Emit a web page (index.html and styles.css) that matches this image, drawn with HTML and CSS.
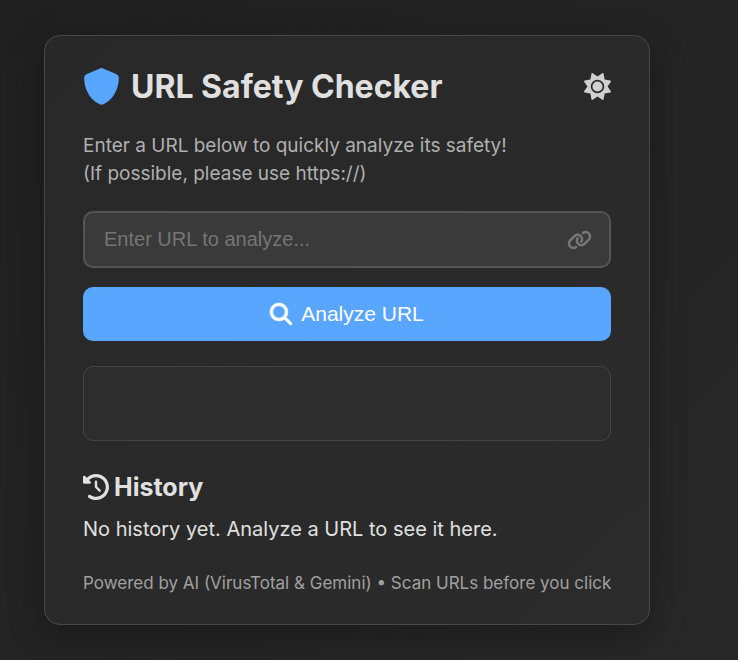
FILE: index.html
```html
<!DOCTYPE html>
<html lang="en">
<head>
<meta charset="utf-8">
<meta name="viewport" content="width=device-width, initial-scale=1">
<title>URL Safety Checker</title>
<link rel="stylesheet" href="styles.css">
</head>
<body>
<main class="card">
  <header class="header">
    <svg class="shield" viewBox="0 0 512 512" aria-hidden="true"><path d="M256 0c4.6 0 9.2 1 13.4 2.9L457.7 82.8c22 9.3 38.4 31 38.3 57.2c-.5 99.2-41.3 280.7-213.6 363.2c-16.7 8-36.1 8-52.8 0C57.3 420.7 16.5 239.2 16 140c-.1-26.2 16.3-47.9 38.3-57.2L242.7 2.9C246.8 1 251.4 0 256 0z"/></svg>
    <h1 class="title">URL Safety Checker</h1>
    <button class="theme-toggle" type="button" aria-label="Toggle theme">
      <svg class="icon-theme" viewBox="0 0 512 512" aria-hidden="true"><path d="M361.5 1.2c5 2.1 8.6 6.6 9.6 11.9L391 121l107.9 19.8c5.3 1 9.8 4.6 11.9 9.6s1.5 10.7-1.6 15.2L446.9 256l62.3 90.3c3.1 4.5 3.7 10.2 1.6 15.2s-6.6 8.6-11.9 9.6L391 391 371.1 498.9c-1 5.3-4.6 9.8-9.6 11.9s-10.7 1.5-15.2-1.6L256 446.9l-90.3 62.3c-4.5 3.1-10.2 3.7-15.2 1.6s-8.6-6.6-9.6-11.9L121 391 13.1 371.1c-5.3-1-9.8-4.6-11.9-9.6s-1.5-10.7 1.6-15.2L65.1 256 2.8 165.7c-3.1-4.5-3.7-10.2-1.6-15.2s6.6-8.6 11.9-9.6L121 121 140.9 13.1c1-5.3 4.6-9.8 9.6-11.9s10.7-1.5 15.2 1.6L256 65.1 346.3 2.8c4.5-3.1 10.2-3.7 15.2-1.6zM160 256a96 96 0 1 1 192 0 96 96 0 1 1 -192 0zm224 0a128 128 0 1 0 -256 0 128 128 0 1 0 256 0z"/></svg>
    </button>
  </header>
  <p class="intro">Enter a URL below to quickly analyze its safety!<br>(If possible, please use https://)</p>
  <form class="form">
    <div class="field">
      <input class="url-input" type="text" aria-label="URL" placeholder="Enter URL to analyze...">
      <svg class="icon-link" viewBox="0 0 640 512" aria-hidden="true"><path d="M579.8 267.7c56.5-56.5 56.5-148 0-204.5c-50-50-128.8-56.5-186.3-15.4l-1.6 1.1c-14.4 10.3-17.7 30.3-7.4 44.6s30.3 17.7 44.6 7.4l1.6-1.1c32.1-22.9 76-19.3 103.8 8.6c31.5 31.5 31.5 82.5 0 114L422.3 334.8c-31.5 31.5-82.5 31.5-114 0c-27.9-27.9-31.5-71.8-8.6-103.8l1.1-1.6c10.3-14.4 6.9-34.4-7.4-44.6s-34.4-6.9-44.6 7.4l-1.1 1.6C206.5 251.2 213 330 263 380c56.5 56.5 148 56.5 204.5 0L579.8 267.7zM60.2 244.3c-56.5 56.5-56.5 148 0 204.5c50 50 128.8 56.5 186.3 15.4l1.6-1.1c14.4-10.3 17.7-30.3 7.4-44.6s-30.3-17.7-44.6-7.4l-1.6 1.1c-32.1 22.9-76 19.3-103.8-8.6C74 372 74 321 105.5 289.5L217.7 177.2c31.5-31.5 82.5-31.5 114 0c27.9 27.9 31.5 71.8 8.6 103.9l-1.1 1.6c-10.3 14.4-6.9 34.4 7.4 44.6s34.4 6.9 44.6-7.4l1.1-1.6C433.5 260.8 427 182 377 132c-56.5-56.5-148-56.5-204.5 0L60.2 244.3z"/></svg>
    </div>
    <button class="analyze" type="button">
      <svg class="icon-search" viewBox="0 0 512 512" aria-hidden="true"><path stroke="currentColor" stroke-width="14" d="M416 208c0 45.900-14.900 88.300-40 122.700L502.600 457.400c12.500 12.500 12.500 32.800 0 45.300s-32.800 12.500-45.300 0L330.700 376c-34.400 25.200-76.800 40-122.700 40C93.100 416 0 322.900 0 208S93.100 0 208 0S416 93.100 416 208zM208 352a144 144 0 1 0 0-288 144 144 0 1 0 0 288z"/></svg>
      Analyze URL
    </button>
  </form>
  <section class="result" aria-label="Result"></section>
  <section class="history">
    <h2 class="history-title">
      <svg class="icon-history" viewBox="0 0 512 512" aria-hidden="true"><path d="M75 75L41 41C25.900 25.900 0 36.600 0 57.900V168c0 13.300 10.700 24 24 24H134.100c21.400 0 32.100-25.900 17-41l-30.800-30.800C155 85.500 203 64 256 64c106 0 192 86 192 192s-86 192-192 192c-40.800 0-78.600-12.700-109.700-34.400c-14.500-10.100-34.400-6.600-44.600 7.900s-6.600 34.400 7.900 44.600C151.200 495 201.700 512 256 512c141.400 0 256-114.600 256-256S397.400 0 256 0C185.300 0 121.300 28.700 75 75zm181 53c-13.300 0-24 10.700-24 24V256c0 6.400 2.500 12.500 7 17l72 72c9.400 9.400 24.600 9.400 33.900 0s9.400-24.600 0-33.900l-65-65V152c0-13.300-10.700-24-24-24z"/></svg>
      History
    </h2>
    <p class="history-empty">No history yet. Analyze a URL to see it here.</p>
  </section>
  <footer class="footer">Powered by AI (VirusTotal &amp; Gemini) • Scan URLs before you click</footer>
</main>
</body>
</html>
```
FILE: styles.css
```css
* {
  box-sizing: border-box;
}

body {
  margin: 0;
  min-height: 100vh;
  padding: 35px 88px 35px 44px;
  background: linear-gradient(135deg, #202020, #282828);
  color: #e0e0e0;
  font-family: Inter, "Liberation Sans", sans-serif;
}

h1, h2, p {
  margin: 0;
}

svg {
  display: block;
  flex: none;
  fill: currentColor;
  overflow: visible;
}

.card {
  padding: 30px 38px 29px;
  background: linear-gradient(135deg, #282828, #2b2b2b);
  border: 1px solid #484848;
  border-radius: 16px;
  box-shadow: 0 10px 36px rgba(0, 0, 0, 0.3);
}

.header {
  display: flex;
  align-items: center;
  margin-bottom: 25px;
}

.shield {
  width: 37px;
  height: 37px;
  color: #58a6ff;
}

.title {
  flex: 1;
  margin-left: 11px;
  font-size: 32px;
  line-height: 41px;
  font-weight: 700;
}

.theme-toggle {
  padding: 0;
  border: 0;
  background: none;
  color: #d0d0d0;
  cursor: pointer;
}

.icon-theme {
  width: 27px;
  height: 27px;
}

.intro {
  margin-bottom: 23px;
  color: #b0b0b0;
  font-size: 19px;
  line-height: 28px;
}

.form {
  display: grid;
  gap: 19px;
  margin-bottom: 25px;
}

.field {
  display: flex;
  align-items: center;
  padding: 0 17px 0 19px;
  border: 2px solid #555;
  border-radius: 10px;
  background: #3a3a3a;
  color: #777;
}

.url-input {
  flex: 1;
  min-width: 0;
  height: 53px;
  padding: 0;
  border: 0;
  outline: 0;
  background: none;
  color: #e0e0e0;
  font: 20px "Liberation Sans", Arial, sans-serif;
}

.url-input::placeholder {
  color: #757575;
}

.icon-link {
  width: 25px;
  height: 20px;
}

.analyze {
  display: flex;
  align-items: center;
  justify-content: center;
  gap: 9px;
  height: 54px;
  padding: 0;
  border: 0;
  border-radius: 10px;
  background: #58a6ff;
  color: #fff;
  font: 21px "Liberation Sans", Arial, sans-serif;
  cursor: pointer;
}

.icon-search {
  width: 22px;
  height: 22px;
}

.result {
  min-height: 75px;
  margin-bottom: 29px;
  border: 1px solid #444;
  border-radius: 10px;
  background: #2d2d2d;
}

.history {
  margin-bottom: 28px;
}

.history-title {
  display: flex;
  align-items: center;
  gap: 5px;
  margin-bottom: 11px;
  font-size: 25px;
  line-height: 34px;
  font-weight: 700;
}

.icon-history {
  width: 26px;
  height: 26px;
}

.history-empty {
  font-size: 20px;
  line-height: 28px;
}

.footer {
  color: #a0a0a0;
  font-size: 17px;
  line-height: 24px;
}

@media (min-width: 720px) {
  .footer {
    white-space: nowrap;
  }
}
```
